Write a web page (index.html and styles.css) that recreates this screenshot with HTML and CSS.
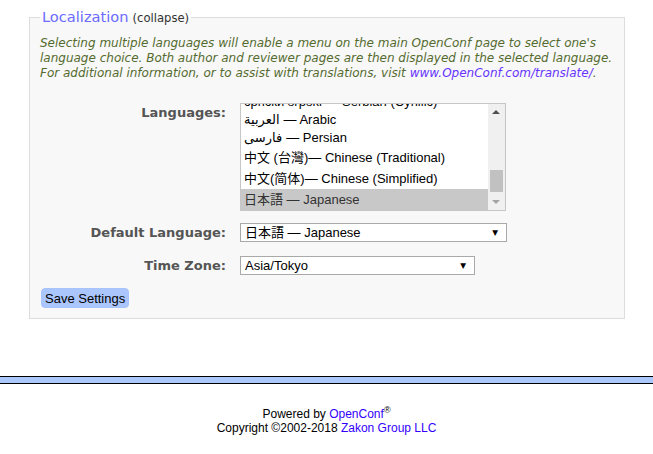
FILE: index.html
```html
<!DOCTYPE html>
<html lang="en">
<head>
<meta charset="utf-8">
<title>Localization</title>
<link rel="stylesheet" href="styles.css">
</head>
<body>
<div class="main">
  <fieldset class="section">
    <legend class="section-legend"><span class="legend-title">Localization</span> <span class="legend-toggle">(collapse)</span></legend>
    <p class="note">Selecting multiple languages will enable a menu on the main OpenConf page to select one's language choice. Both author and reviewer pages are then displayed in the selected language. For additional information, or to assist with translations, visit <a class="note-link" href="#">www.OpenConf.com/translate/</a>.</p>
    <div class="form">
      <div class="label label-top">Languages:</div>
      <div class="listbox">
        <div class="list-items">
          <div class="opt opt-clip">српски srpski — Serbian (Cyrillic)</div>
          <div class="opt opt-s"><span class="ar">العربية</span> — Arabic</div>
          <div class="opt opt-s"><span class="ar">فارسی</span> — Persian</div>
          <div class="opt opt-l">中文 (台灣)— Chinese (Traditional)</div>
          <div class="opt opt-l">中文(简体)— Chinese (Simplified)</div>
          <div class="opt opt-l opt-sel">日本語 — Japanese</div>
        </div>
        <div class="vscroll">
          <span class="arrow-up"></span>
          <span class="thumb"></span>
          <span class="arrow-down"></span>
        </div>
      </div>

      <div class="label label-dl">Default Language:</div>
      <div class="select select-wide select-dl"><span class="select-text">日本語 — Japanese</span><span class="caret">▼</span></div>

      <div class="label label-tz">Time Zone:</div>
      <div class="select select-narrow select-tz"><span class="select-text">Asia/Tokyo</span><span class="caret">▼</span></div>
    </div>
    <button class="btn" type="button">Save Settings</button>
  </fieldset>
</div>
<div class="bar"></div>
<footer class="footer">
  <div>Powered by <a href="#" class="flink">OpenConf</a><sup class="reg">®</sup></div>
  <div>Copyright ©2002-2018 <a href="#" class="flink">Zakon Group LLC</a></div>
</footer>
</body>
</html>
```

FILE: styles.css
```css
html, body {
  margin: 0;
  padding: 0;
  background: #ffffff;
}
body {
  font-family: "DejaVu Sans", Verdana, sans-serif;
  color: #000;
}
.main {
  padding-top: 8px;
}
.section {
  margin: 0 28px 0 29px;
  padding: 0 10px 10px 10px;
  border: 1px solid #dddddd;
  background: #f8f8f8;
  min-width: 0;
}
.section-legend {
  padding: 0 2px;
  line-height: 18px;
}
.legend-title {
  font-size: 14.6px;
  color: #6b6bff;
}
.legend-toggle {
  font-size: 11.6px;
  color: #333;
  margin-left: -1px;
}
.note {
  margin: 9px 0 0 0;
  font-size: 12px;
  line-height: 15px;
  font-style: italic;
  color: #556b2f;
}
.note-link {
  color: #6633ff;
  text-decoration: none;
}
.form {
  display: grid;
  grid-template-columns: 186px auto;
  column-gap: 14px;
  justify-items: start;
  margin-top: 22px;
}
.label {
  justify-self: end;
  font-weight: bold;
  font-size: 13px;
  color: #555555;
  line-height: 16px;
}
.label-top { padding-top: 2px; }
.label-dl { margin-top: 14px; }
.label-tz { margin-top: 16px; }

.listbox {
  box-sizing: border-box;
  width: 266px;
  height: 108px;
  border: 1px solid #c6c6c6;
  background: #fff;
  display: flex;
  overflow: hidden;
  font-family: "Liberation Sans", Arial, "Noto Sans CJK JP", sans-serif;
  font-size: 13px;
  color: #000;
}
.list-items {
  flex: 1;
  overflow: hidden;
  display: flex;
  flex-direction: column;
  justify-content: flex-end;
}
.opt {
  padding-left: 3px;
  white-space: nowrap;
  display: flex;
  align-items: center;
  flex-shrink: 0;
  box-sizing: border-box;
}
.opt-clip { height: 20px; margin-top: -14px; }
.opt-s { height: 18px; padding-bottom: 1px; }
.opt-l { height: 21px; padding-bottom: 3px; }
.opt-sel { background: #c8c8c8; color: #333; }
.ar {
  font-family: "DejaVu Sans", sans-serif;
  font-size: 13px;
  margin-right: 4px;
}
.vscroll {
  width: 17px;
  background: #f0f0f0;
  position: relative;
  flex-shrink: 0;
}
.arrow-up, .arrow-down {
  position: absolute;
  left: 4px;
  width: 0;
  height: 0;
  border-left: 4px solid transparent;
  border-right: 4px solid transparent;
}
.arrow-up {
  top: 6px;
  border-bottom: 4px solid #505050;
}
.arrow-down {
  bottom: 6px;
  border-top: 4px solid #a3a3a3;
}
.thumb {
  position: absolute;
  left: 2px;
  width: 13px;
  top: 66px;
  height: 22px;
  background: #c1c1c1;
}

.select {
  box-sizing: border-box;
  height: 19px;
  border: 1px solid #a9a9a9;
  background: #fff;
  display: flex;
  align-items: center;
  justify-content: space-between;
  padding: 0 8px 0 4px;
  font-family: "Liberation Sans", Arial, "Noto Sans CJK JP", sans-serif;
  font-size: 13px;
  color: #000;
}
.select-dl { margin-top: 12px; width: 267px; }
.select-tz { margin-top: 14px; width: 235px; }
.select-text { white-space: nowrap; line-height: 17px; }
.caret {
  font-family: "DejaVu Sans", sans-serif;
  font-size: 7.5px;
  color: #000;
}

.btn {
  margin-top: 13px;
  margin-left: 1px;
  height: 20px;
  padding: 1px 3px 0 3px;
  border: 1px solid #a8c4fc;
  border-radius: 4px;
  background: #abc6fd;
  font-family: "Liberation Sans", Arial, sans-serif;
  font-size: 13px;
  color: #000;
  line-height: 18px;
}

.bar {
  margin-top: 57px;
  height: 6px;
  background: #abc8fb;
  border-top: 1px solid #000;
  border-bottom: 1px solid #000;
}
.footer {
  margin-top: 23px;
  text-align: center;
  font-family: "Liberation Sans", Arial, sans-serif;
  font-size: 12px;
  line-height: 14px;
  color: #000;
}
.flink {
  color: #3300ff;
  text-decoration: none;
}
.reg {
  font-size: 9px;
  line-height: 0;
  vertical-align: 5px;
}
```
